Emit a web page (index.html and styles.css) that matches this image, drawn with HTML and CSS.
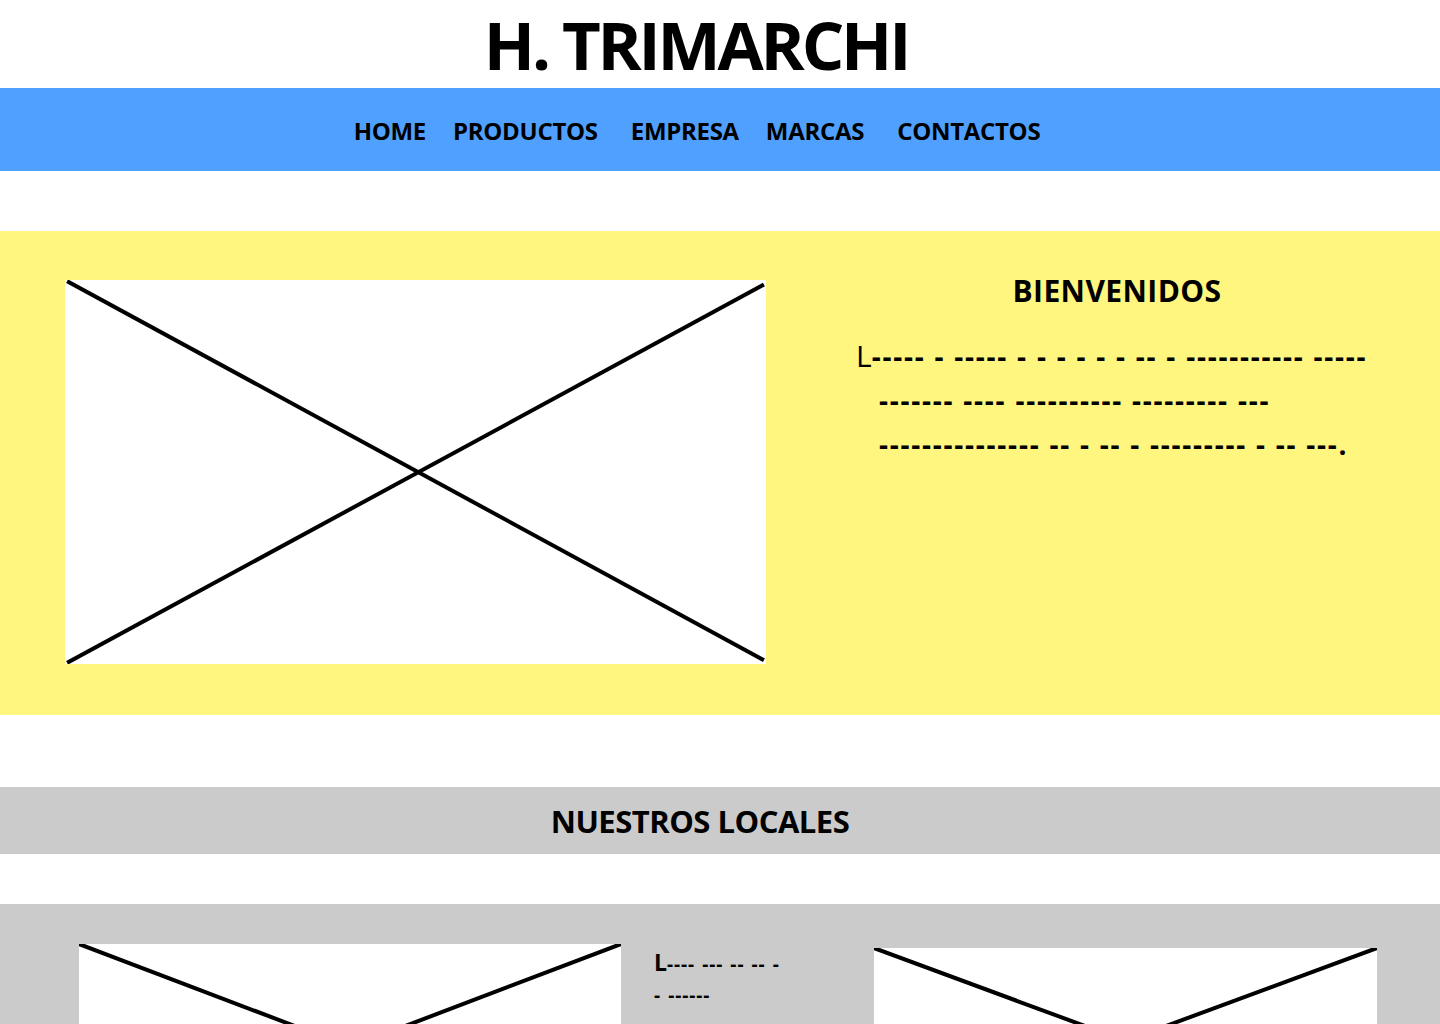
FILE: index.html
```html
<!DOCTYPE html>
<html lang="es">
<head>
<meta charset="utf-8">
<title>H. Trimarchi</title>
<link rel="stylesheet" href="styles.css">
</head>
<body>
<header class="top">
  <h1 class="brand">H. TRIMARCHI</h1>
</header>
<nav class="nav">
  <a class="nav-item" href="#">HOME</a>
  <a class="nav-item nav-item--wide" href="#">PRODUCTOS</a>
  <a class="nav-item" href="#">EMPRESA</a>
  <a class="nav-item nav-item--wide" href="#">MARCAS</a>
  <a class="nav-item" href="#">CONTACTOS</a>
</nav>

<section class="welcome">
  <div class="ph ph-main">
    <svg class="ph-svg" viewBox="0 0 100 100" preserveAspectRatio="none">
      <line x1="0.3" y1="0.3" x2="99.7" y2="99" />
      <line x1="0.3" y1="99.7" x2="99.7" y2="1.2" />
    </svg>
  </div>
  <div class="welcome-text">
    <h2 class="welcome-title">BIENVENIDOS</h2>
    <p class="welcome-para"><span class="cap">L</span>----- - ----- - - - - - - -- - ----------- -----<br><span class="ind">------- ---- ---------- --------- ---</span><br><span class="ind">--------------- -- - -- - --------- - -- ---.</span></p>
  </div>
</section>

<div class="band">
  <h2 class="band-title">NUESTROS LOCALES</h2>
</div>

<section class="locales">
  <div class="ph ph-left">
    <svg class="ph-svg" viewBox="0 0 100 100" preserveAspectRatio="none">
      <line x1="0" y1="0" x2="100" y2="100" />
      <line x1="100" y1="0" x2="0" y2="100" />
    </svg>
  </div>
  <div class="local-text">
    <p class="local-line"><span class="local-cap">L</span>---- --- -- -- -</p>
    <p class="local-line">- ------</p>
  </div>
  <div class="ph ph-right">
    <svg class="ph-svg" viewBox="0 0 100 100" preserveAspectRatio="none">
      <line x1="0" y1="0" x2="100" y2="100" />
      <line x1="100" y1="0" x2="0" y2="100" />
    </svg>
  </div>
</section>
</body>
</html>
```

FILE: styles.css
```css
* { box-sizing: border-box; }

html, body {
  margin: 0;
  padding: 0;
  background: #ffffff;
  font-family: "Open Sans", "Liberation Sans", sans-serif;
  color: #000;
  overflow: hidden;
}

.top {
  height: 88px;
  display: flex;
  justify-content: center;
  align-items: flex-start;
  padding-right: 48px;
}

.brand {
  margin: 4px 0 0;
  font-size: 67px;
  line-height: 80px;
  font-weight: 700;
  letter-spacing: -3.2px;
}

.nav {
  height: 83px;
  background: #4fa0ff;
  display: flex;
  justify-content: center;
  align-items: center;
  gap: 27px;
  padding-right: 46px;
  padding-top: 2px;
}

.nav-item {
  color: #000;
  text-decoration: none;
  font-weight: 700;
  font-size: 24px;
  letter-spacing: -0.3px;
  line-height: 30px;
}

.nav-item--wide {
  margin-right: 6px;
}

.welcome {
  margin-top: 60px;
  height: 484px;
  background: #fff67f;
  display: flex;
  align-items: flex-start;
  padding: 49px 0 0 65px;
}

.ph {
  background: #fff;
  flex: none;
}

.ph-svg {
  display: block;
  width: 100%;
  height: 100%;
}

.ph-svg line {
  stroke: #000;
  stroke-width: 4;
  vector-effect: non-scaling-stroke;
}

.ph-main {
  width: 701px;
  height: 384px;
}

.welcome-text {
  margin-left: 90px;
  width: 522px;
}

.welcome-title {
  margin: -1px 0 0;
  text-align: center;
  font-size: 30px;
  font-weight: 700;
  line-height: 24px;
  letter-spacing: 0.4px;
}

.welcome-para {
  margin: 31px 0 0;
  font-size: 28px;
  line-height: 44px;
  font-weight: 700;
  letter-spacing: 1.75px;
  word-spacing: 0;
  white-space: nowrap;
}

.cap {
  font-weight: 400;
  font-size: 30px;
  letter-spacing: 0;
}

.ind {
  padding-left: 23px;
}

.band {
  margin-top: 72px;
  height: 67px;
  background: #cbcbcb;
  display: flex;
  justify-content: center;
  align-items: center;
  padding-right: 40px;
}

.band-title {
  margin: 0;
  font-size: 31px;
  font-weight: 700;
  letter-spacing: -0.5px;
  line-height: 36px;
}

.locales {
  margin-top: 50px;
  height: 400px;
  background: #cbcbcb;
  display: flex;
  align-items: flex-start;
  padding: 40px 0 0 79px;
}

.ph-left {
  width: 542px;
  height: 206px;
}

.local-text {
  width: 253px;
  padding: 3px 0 0 33px;
}

.local-line {
  margin: 0;
  font-size: 19px;
  font-weight: 700;
  line-height: 31px;
  letter-spacing: 0.9px;
  word-spacing: 1.3px;
  white-space: nowrap;
}

.local-cap {
  font-size: 23px;
  letter-spacing: 0;
}

.ph-right {
  margin-top: 4px;
  width: 503px;
  height: 186px;
}
```
